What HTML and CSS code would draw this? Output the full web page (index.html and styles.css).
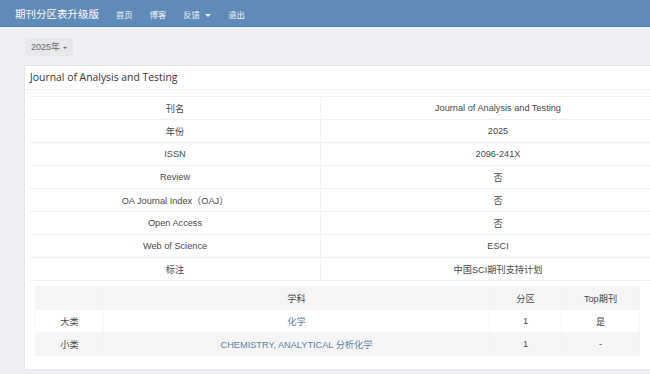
FILE: index.html
```html
<!DOCTYPE html>
<html lang="zh-CN">
<head>
  <meta charset="UTF-8" />
  <meta name="viewport" content="width=device-width, initial-scale=1.0"/>
  <title>期刊分区表升级版</title>
  <link rel="stylesheet" href="styles.css">
</head>
<body>
  <nav class="navbar">
    <a class="brand" href="#">期刊分区表升级版</a>
    <ul class="nav">
      <li><a href="#">首页</a></li>
      <li><a href="#">博客</a></li>
      <li><a href="#">反馈 <span class="caret"></span></a></li>
      <li><a href="#">退出</a></li>
    </ul>
  </nav>

  <div class="container">
    <div class="year-bar">
      <button class="year-btn">2025年 <span class="caret"></span></button>
    </div>

    <div class="panel">
      <div class="panel-heading">Journal of Analysis and Testing</div>
      <div class="panel-body">
        <table class="info-table">
          <tr><td>刊名</td><td>Journal of Analysis and Testing</td></tr>
          <tr><td>年份</td><td>2025</td></tr>
          <tr><td>ISSN</td><td>2096-241X</td></tr>
          <tr><td>Review</td><td>否</td></tr>
          <tr><td>OA Journal Index（OAJ）</td><td>否</td></tr>
          <tr><td>Open Access</td><td>否</td></tr>
          <tr><td>Web of Science</td><td>ESCI</td></tr>
          <tr><td>标注</td><td>中国SCI期刊支持计划</td></tr>
        </table>

        <table class="zone-table">
          <thead>
            <tr><th class="c-kind"></th><th class="c-subject">学科</th><th class="c-zone">分区</th><th class="c-top">Top期刊</th></tr>
          </thead>
          <tbody>
            <tr><td>大类</td><td><a href="#">化学</a></td><td>1</td><td>是</td></tr>
            <tr><td>小类</td><td><a href="#">CHEMISTRY, ANALYTICAL 分析化学</a></td><td>1</td><td>-</td></tr>
          </tbody>
        </table>
      </div>
    </div>
  </div>
</body>
</html>
```

FILE: styles.css
```css
body {
  margin: 0;
  background: #eef0f4;
  color: #333;
  font-family: "Liberation Sans", Arial, "Noto Sans CJK SC", sans-serif;
  overflow: hidden;
}
a { text-decoration: none; }

.navbar {
  display: flex;
  align-items: center;
  height: 26px;
  background: #5e8bb8;
  border-bottom: 1px solid #557fa9;
  padding-left: 15px;
}
.brand {
  color: #fff;
  font-size: 10.5px;
  margin-right: 17px;
}
.nav {
  display: flex;
  list-style: none;
  margin: 0;
  padding: 0;
  gap: 17px;
}
.nav a {
  color: #f2f6fa;
  font-size: 8.3px;
}
.caret {
  display: inline-block;
  width: 0;
  height: 0;
  margin-left: 3px;
  vertical-align: middle;
  border-top: 3px solid;
  border-left: 3px solid transparent;
  border-right: 3px solid transparent;
}

.container {
  padding-left: 24px;
}
.year-bar {
  padding: 9px 0 9px 1px;
}
.year-btn {
  height: 18px;
  padding: 0 6px;
  border: none;
  border-radius: 2px;
  background: #e6e8ec;
  color: #666;
  font-family: "Liberation Sans", Arial, "Noto Sans CJK SC", sans-serif;
  font-size: 9px;
}
.year-btn .caret {
  margin-left: 0;
  border-top-width: 2.5px;
  border-left-width: 2.5px;
  border-right-width: 2.5px;
}

/* panel runs off the right edge in the screenshot */
.panel {
  overflow: hidden;
  background: #fff;
  border: 1px solid #e2e4e8;
  border-right: none;
  box-shadow: 0 1px 1px rgba(0,0,0,0.04);
}
.panel-heading {
  height: 23px;
  line-height: 23px;
  padding: 0 5px;
  border-bottom: 1px solid #f1f1f1;
  font-family: "Open Sans", "Noto Sans CJK SC", sans-serif;
  font-size: 10.4px;
  color: #333;
}
.panel-body {
  padding: 6px 5px 13px;
}

table {
  border-collapse: collapse;
  font-size: 9.2px;
  color: #484848;
  table-layout: fixed;
}
td, th {
  height: 22px;
  padding: 0 6px;
  text-align: center;
  font-weight: normal;
  border-top: 1px solid #efefef;
}

.info-table {
  width: 645px;
}
.info-table td:first-child {
  width: 278px;
  border-right: 1px solid #f2f2f2;
}
.info-table tr:last-child td {
  border-bottom: 1px solid #efefef;
}

.zone-table {
  width: 605px;
  margin: 5px 0 0 5px;
}
.zone-table td, .zone-table th {
  border: 1px solid #f4f4f4;
}
.zone-table thead tr,
.zone-table tbody tr:nth-child(2) {
  background: #f5f5f5;
}
.zone-table .c-kind { width: 55px; }
.zone-table .c-subject { width: 373px; }
.zone-table .c-zone { width: 59px; }
.zone-table a { color: #5b7ea6; }
```
